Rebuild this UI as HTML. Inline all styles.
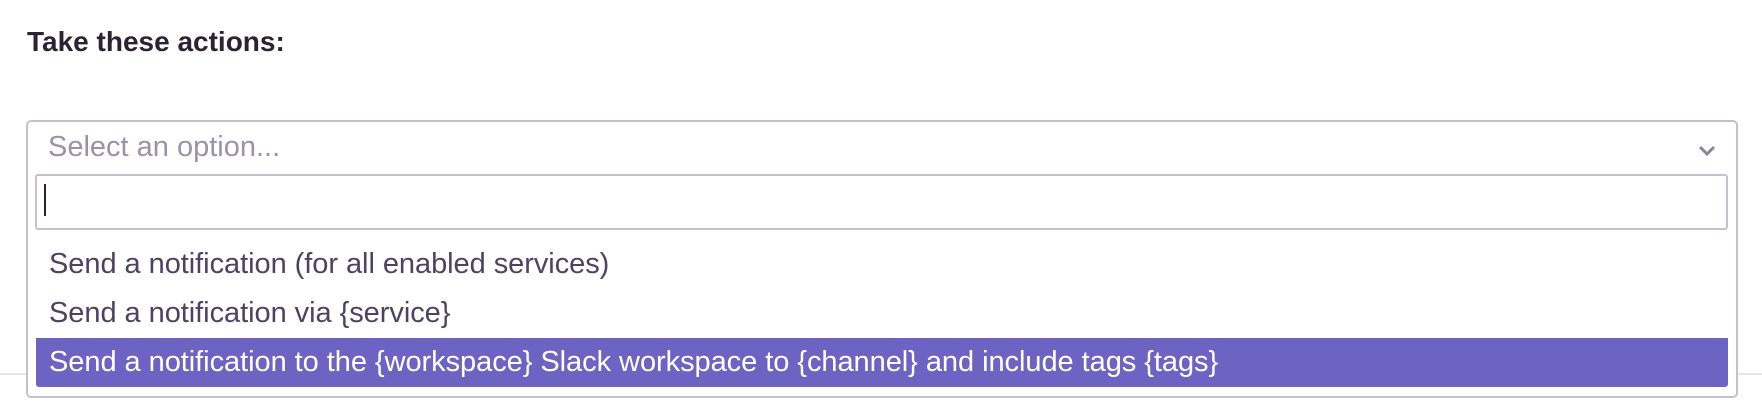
<!DOCTYPE html>
<html><head><style>
body{margin:0;width:1762px;height:412px;background:#fff;position:relative;overflow:hidden;font-family:"Liberation Sans",sans-serif}
.t{position:absolute;left:27px;top:26px;font-size:28px;font-weight:bold;color:#2b2233}
.sep{position:absolute;left:0;right:0;top:373px;height:2px;background:#e9e7ec}
.box{position:absolute;left:26px;top:120px;width:1708px;height:274px;border:2px solid #c6bfd3;border-radius:5px;background:#fff}
.ph{position:absolute;left:48px;top:131px;font-size:29px;color:#9b91a8}
.chev{position:absolute;left:1697px;top:144px}
.inp{position:absolute;left:35px;top:174px;width:1689px;height:52px;border:2px solid #c6bfd3;border-radius:3px;background:#fff}
.cur{position:absolute;left:44px;top:184px;width:2px;height:32px;background:#2b2233}
.o{position:absolute;left:36px;width:1692px;height:49px;line-height:49px;padding-left:13px;box-sizing:border-box;font-size:29px;color:#4e4262;letter-spacing:-0.05px}
.hl{background:#6c63c2;color:#fff;border-radius:0 0 3px 3px}
</style></head><body>
<div class="t">Take these actions:</div>
<div class="sep"></div>
<div class="box"></div>
<div class="ph">Select an option...</div>
<svg class="chev" width="20" height="14" viewBox="0 0 20 14"><path d="M3 3 L10 10 L17 3" fill="none" stroke="#8c8399" stroke-width="3"/></svg>
<div class="inp"></div>
<div class="cur"></div>
<div class="o" style="top:240px">Send a notification (for all enabled services)</div>
<div class="o" style="top:289px">Send a notification via {service}</div>
<div class="o hl" style="top:338px">Send a notification to the {workspace} Slack workspace to {channel} and include tags {tags}</div>
</body></html>
